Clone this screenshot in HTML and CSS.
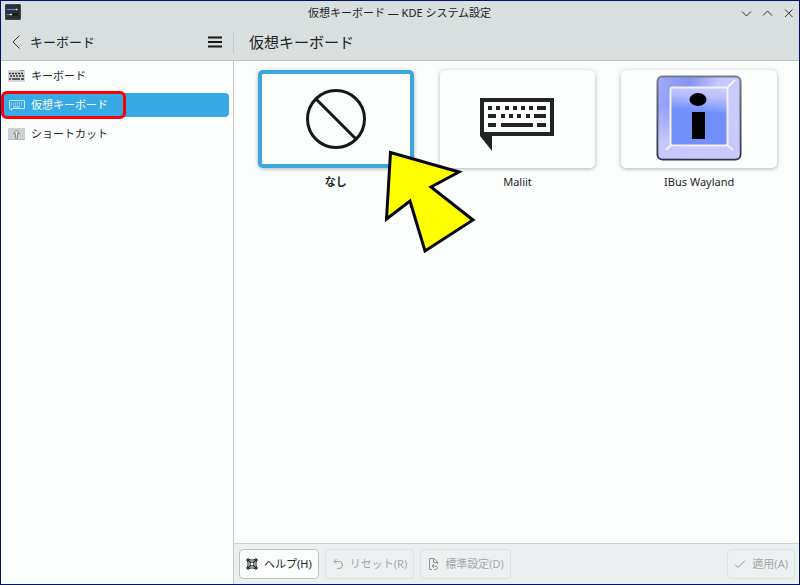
FILE: index.html
```html
<!DOCTYPE html>
<html lang="ja">
<head>
<meta charset="utf-8">
<title>仮想キーボード — KDE システム設定</title>
<link rel="stylesheet" href="styles.css">
</head>
<body>
<div class="window">
  <header class="titlebar">
    <svg class="app-icon" width="16" height="16" viewBox="0 0 16 16" aria-hidden="true">
      <rect x="0.500" y="0.500" width="15" height="15" rx="0.500" fill="#2b3036" stroke="#3f454a"/>
      <path d="M2 5.500h11M2 10.500h11" stroke="#11151a" stroke-width="2"/>
      <path d="M2 5.500h8" stroke="#4b91d6" stroke-width="1.500"/>
      <path d="M2 10.500h3" stroke="#4b91d6" stroke-width="1.500"/>
      <path d="M10.500 5.500h2M5 10.500h2" stroke="#fff" stroke-width="1.500"/>
    </svg>
    <span class="window-title">仮想キーボード — KDE システム設定</span>
    <div class="window-controls">
      <button type="button" aria-label="最小化"><svg width="11" height="11" viewBox="0 0 11 11"><path d="M1 3.500 5.500 8 10 3.500"/></svg></button>
      <button type="button" aria-label="最大化"><svg width="11" height="11" viewBox="0 0 11 11"><path d="M1 7.500 5.500 3 10 7.500"/></svg></button>
      <button type="button" aria-label="閉じる"><svg width="11" height="11" viewBox="0 0 11 11"><path d="m2 1.500 7.500 7.500M9.500 1.500 2 9"/></svg></button>
    </div>
  </header>
  <div class="toolbar">
    <div class="side-head">
      <button type="button" class="back"><svg width="10" height="14" viewBox="0 0 10 14" aria-hidden="true"><path d="M8.500 0.500 2 7l6.500 6.500"/></svg><span>キーボード</span></button>
      <button type="button" class="menu" aria-label="メニュー"><svg width="14" height="12" viewBox="0 0 14 12"><path d="M0 1.500h14M0 6h14M0 10.500h14"/></svg></button>
    </div>
    <h1>仮想キーボード</h1>
  </div>
  <div class="body">
    <nav class="sidebar">
      <a href="#keyboard">
        <svg width="17" height="12" viewBox="0 0 17 12" aria-hidden="true"><path fill="#d3d7d8" d="M0 0h17v12H0z"/><path d="M12 .5h4" stroke="#4ba6d8"/><path d="M1 3.500h15M2 6h14" stroke="#333" stroke-width="1.500" stroke-dasharray="2 1"/><path d="M1 9h2m1 0h8m1 0h3" stroke="#333" stroke-width="1.500"/></svg>
        <span>キーボード</span>
      </a>
      <a href="#virtual" class="selected" aria-current="page">
        <svg width="17" height="12" viewBox="0 0 17 12" fill="none" stroke="#c4e7fa" aria-hidden="true"><path d="M1.500 1.500h15v8h-13v2l-2-2z"/><path d="M3 4h11M3 6h11" stroke-dasharray="1 1"/><path d="M5 8h7"/></svg>
        <span>仮想キーボード</span>
        <i class="highlight"></i>
      </a>
      <a href="#shortcuts">
        <svg width="17" height="12" viewBox="0 0 17 12" aria-hidden="true"><path fill="#cdd1d2" d="M0 0h17v12H0z"/><path fill="#b4b9ba" d="M0 11h17v1H0z"/><path d="m8.500 2 3 3.500h-2V10h-2V5.500h-2z" fill="#e6e8e8" stroke="#85898a"/></svg>
        <span>ショートカット</span>
      </a>
    </nav>
    <main>
      <div class="cards">
        <button type="button" class="card selected" aria-pressed="true">
          <span class="preview">
            <svg width="62" height="62" viewBox="0 0 62 62" fill="none" stroke="#171919" stroke-width="3" aria-hidden="true"><circle cx="31" cy="31" r="28.500"/><path d="m11 11 40 40"/></svg>
          </span>
          <span class="name">なし</span>
          <svg class="pointer" width="92" height="104" viewBox="0 0 92 104" aria-hidden="true"><path d="M5.500 2.500 74 22 46 37l42 33-48 31L25 51 1.500 69z" fill="#ff0" stroke="#080808" stroke-width="3"/></svg>
        </button>
        <button type="button" class="card" aria-pressed="false">
          <span class="preview">
            <svg class="maliit" width="74" height="54" viewBox="0 0 74 54" aria-hidden="true">
              <path fill="#202424" d="M0 0h74v38H12v15L0 38z"/><path fill="#fff" d="M4 4h66v30H4z"/>
              <path fill="#202424" d="M8 8h4v4H8zm8 0h4v4h-4zm9 0h4v4h-4zm8 0h4v4h-4zm8 0h4v4h-4zm8 0h4v4h-4zm8 0h9v4h-9zM8 16h8v4H8zm13 0h4v4h-4zm8 0h4v4h-4zm8 0h4v4h-4zm9 0h4v4h-4zm8 0h12v4H54zM8 25h8v4H8zm13 0h32v4H21zm36 0h9v4h-9z"/>
            </svg>
          </span>
          <span class="name">Maliit</span>
        </button>
        <button type="button" class="card" aria-pressed="false">
          <span class="preview">
            <svg class="ibus" width="86" height="86" viewBox="0 0 86 86" aria-hidden="true">
              <defs>
                <linearGradient id="rim" x1="0" y1="0.150" x2="1" y2="0.350"><stop offset="0" stop-color="#9da9fb"/><stop offset=".35" stop-color="#8494f4"/><stop offset=".7" stop-color="#c6c7fc"/><stop offset="1" stop-color="#ccccff"/></linearGradient>
                <linearGradient id="low" x1="0" y1="0" x2="0" y2="1"><stop offset=".35" stop-color="#c8c8fd" stop-opacity="0"/><stop offset=".8" stop-color="#c8c8fd"/></linearGradient>
                <linearGradient id="face" x1="0.400" y1="0" x2="0.300" y2="1"><stop offset="0" stop-color="#c7cafc"/><stop offset=".15" stop-color="#b4bcfb"/><stop offset=".4" stop-color="#7190fa"/><stop offset="1" stop-color="#7190fa"/></linearGradient>
                <linearGradient id="edge" x1="0" y1="0" x2="0" y2="1"><stop offset="0" stop-color="#777a88"/><stop offset="1" stop-color="#323541"/></linearGradient>
              </defs>
              <rect x="1.500" y="1.500" width="83" height="83" rx="5" fill="url(#rim)" stroke="url(#edge)" stroke-width="2"/>
              <rect x="2.500" y="2.500" width="81" height="81" rx="4" fill="url(#low)"/>
              <path d="m71 13 8-8M15 70l-5 5m61-5 6 5" stroke="#f4f4ff" stroke-width="2"/>
              <rect x="14.500" y="12.500" width="57" height="58" rx="2" fill="url(#face)" stroke="#f0f0ff" stroke-width="2"/>
              <ellipse cx="42" cy="24.500" rx="8.500" ry="6.500"/><path d="M36 37h13v27H36z"/>
            </svg>
          </span>
          <span class="name">IBus Wayland</span>
        </button>
      </div>
      <footer>
        <button type="button"><svg width="12" height="12" viewBox="0 0 12 12" fill="none" stroke="#171919" aria-hidden="true"><path d="M1 3V1h2l1 1h4l1-1h2v2l-1 1v4l1 1v2H9l-1-1H4l-1 1H1V9l1-1V4z" stroke-width="1"/><circle cx="6" cy="6" r="2"/><path d="m1.500 1.500 3 3m6-3-3 3m-6 6 3-3m6 3-3-3" stroke-width="1.500"/></svg>ヘルプ(H)</button>
        <button type="button" disabled><svg width="12" height="12" viewBox="0 0 12 12" fill="none" stroke="#9fa3a4" aria-hidden="true"><path d="M4.500 1 2 3.500 4.500 6M2 3.500h5a3.500 3.500 0 0 1 0 7H5"/></svg>リセット(R)</button>
        <button type="button" disabled><svg width="12" height="12" viewBox="0 0 12 12" fill="none" stroke="#8d9192" aria-hidden="true"><path d="M5 11.500H2.500V.5H7L10.500 4v2M6.500.5v4h4M7 6 5 8l2 2M5 8h3.500a1.500 1.500 0 0 1 0 3.500H7"/></svg>標準設定(D)</button>
        <button type="button" class="apply" disabled><svg width="12" height="12" viewBox="0 0 12 12" fill="none" stroke="#8d9192" aria-hidden="true"><path d="m1 6.500 3 3 7-7"/></svg>適用(A)</button>
      </footer>
    </main>
  </div>
</div>
</body>
</html>
```
FILE: styles.css
```css
* { box-sizing: border-box; }
body {
  margin: 0;
  color: #202425;
  font: 11px/16px "Noto Sans", "Noto Sans CJK JP", sans-serif;
}
button {
  margin: 0;
  padding: 0;
  border: 0;
  background: none;
  color: inherit;
  font: inherit;
}
svg { display: block; flex: none; overflow: visible; }
.window {
  display: flex;
  flex-direction: column;
  min-height: 100vh;
  border: 1px solid #001463;
  background: #fcfefe;
}
.titlebar {
  display: grid;
  grid-template-columns: 1fr auto 1fr;
  align-items: center;
  height: 24px;
  padding: 0 5px 0 4px;
  background: #d9dedf;
}
.app-icon { margin-bottom: 2px; }
.window-controls { display: flex; gap: 10px; justify-content: flex-end; }
.window-controls svg,
.back svg { fill: none; stroke: #2e3233; }
.toolbar {
  display: flex;
  align-items: center;
  height: 36px;
  padding-bottom: 1px;
  border-bottom: 1px solid #bfc4c5;
  background: #d9dedf;
}
.side-head {
  display: flex;
  align-items: center;
  justify-content: space-between;
  width: 233px;
  height: 22px;
  padding: 0 11px 0 10px;
  border-right: 1px solid #c1c6c7;
  font-size: 13px;
}
.back { display: flex; align-items: center; gap: 9px; }
.menu svg { stroke: #171919; stroke-width: 2; }
h1 { margin: 0 0 0 15px; font-size: 15px; font-weight: 400; line-height: 20px; }
.body { display: flex; flex: 1; }
.sidebar {
  display: flex;
  flex: none;
  flex-direction: column;
  gap: 5px;
  width: 233px;
  padding: 3px 4px 0 0;
  border-right: 1px solid #c5cacb;
}
.sidebar a {
  position: relative;
  display: flex;
  align-items: center;
  gap: 6px;
  height: 24px;
  padding-left: 7px;
  border-radius: 4px;
  color: inherit;
  text-decoration: none;
}
.sidebar .selected { background: #37aae6; color: #fff; }
.highlight {
  position: absolute;
  top: -2px;
  left: 0;
  width: 125px;
  height: 28px;
  border: 3px solid #fa0006;
  border-radius: 6px;
}
main { display: flex; flex: 1; flex-direction: column; min-width: 0; }
.cards {
  display: grid;
  flex: 1;
  grid-template-columns: repeat(3, 1fr);
  align-content: start;
  gap: 26px;
  padding: 9px 22px 0 24px;
}
.card { position: relative; display: flex; flex-direction: column; gap: 6px; }
.card.selected { z-index: 1; }
.preview {
  display: flex;
  align-items: center;
  justify-content: center;
  width: 100%;
  height: 98px;
  border-radius: 5px;
  background: #fdfefe;
  box-shadow: 0 1px 4px #aeb3b4;
}
.selected .preview { border: 4px solid #3ba6df; }
.maliit { margin-top: 12px; }
.ibus { margin-bottom: 2px; }
.name { width: 100%; text-align: center; }
.selected .name { font-weight: 700; }
.pointer { position: absolute; top: 80px; left: 127px; }
footer {
  display: flex;
  gap: 6px;
  padding: 5px 4px 5px 5px;
  border-top: 1px solid #ccd1d2;
  background: #eceff0;
}
footer button {
  display: flex;
  align-items: center;
  gap: 6px;
  height: 30px;
  padding: 0 6px;
  border: 1px solid #bfc4c5;
  border-radius: 4px;
  background: #fcfdfd;
}
footer button:disabled { border-color: #dde1e2; background: #edf0f1; color: #a3a7a8; }
footer .apply { margin-left: auto; }
```
